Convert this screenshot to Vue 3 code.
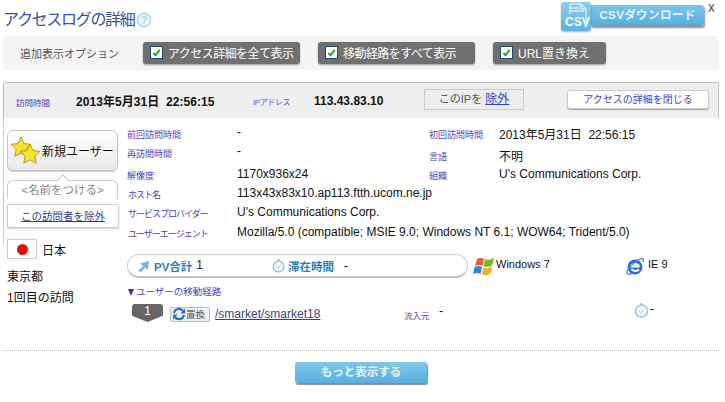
<script setup>
const options = [
  { label: 'アクセス詳細を全て表示', width: 157, tight: true },
  { label: '移動経路をすべて表示', width: 157, tight: true },
  { label: 'URL置き換え', width: 113, tight: false }
]
const leftRows = [
  { key: '前回訪問時間', val: '-', h: 16, cls: 'dash' },
  { key: '再訪問時間', val: '-', h: 22, cls: 'dash' },
  { key: '解像度', val: '1170x936x24', h: 22, cls: '' },
  { key: 'ホスト名', val: '113x43x83x10.ap113.ftth.ucom.ne.jp', h: 16, cls: '', kana: true },
  { key: 'サービスプロバイダー', val: "U's Communications Corp.", h: 22, cls: '', kana: true },
  { key: 'ユーザーエージェント', val: 'Mozilla/5.0 (compatible; MSIE 9.0; Windows NT 6.1; WOW64; Trident/5.0)', h: 18, cls: '', kana: true }
]
</script>

<template>
  <div class="page">
    <header class="top">
      <h1 class="title"><span class="title-text">アクセスログの詳細</span><svg class="help" viewBox="0 0 16 16" width="16" height="16"><circle cx="8" cy="8" r="6.6" fill="#f2fafd" stroke="#a9dcf0" stroke-width="1.6"/><text x="8" y="12" text-anchor="middle" class="help-q">?</text></svg></h1>
      <div class="csv">
        <div class="csv-icon">
          <svg viewBox="0 0 30 29" width="30" height="29">
            <path d="M9 12V2h11l5 5v18h-1" fill="none" stroke="#fff" stroke-width="1"/>
            <path d="M20 2v5h5M10 6h8M10 9h13" fill="none" stroke="#fff" stroke-width="1"/>
          </svg>
          <span class="csv-word">CSV</span>
        </div>
        <div class="csv-btn">CSVダウンロード</div>
      </div>
      <span class="close">X</span>
    </header>

    <section class="options">
      <span class="options-label">追加表示オプション</span>
      <div v-for="o in options" :key="o.label" class="opt" :class="{ tight: o.tight }" :style="{ width: o.width + 'px' }">
        <span class="check"><svg viewBox="0 0 10 10" width="10" height="10"><path d="M1.5 5.5 4 8l4.6-6" fill="none" stroke="#2aa52a" stroke-width="2.2"/></svg></span>
        {{ o.label }}
      </div>
    </section>

    <section class="panel">
      <div class="panel-head">
        <span class="lbl visit">訪問時間</span>
        <b class="visit-val">2013年5月31日&nbsp;&nbsp;22:56:15</b>
        <span class="lbl ip-lbl">IPアドレス</span>
        <b class="ip-val">113.43.83.10</b>
        <div class="ip-ex">このIPを <a>除外</a></div>
        <div class="close-detail">アクセスの詳細を閉じる</div>
      </div>

      <div class="panel-body">
        <aside class="side">
          <div class="new-user">
            <svg class="stars" viewBox="0 0 32 30" width="32" height="30">
              <path d="M11 1l3 6.600 7 .8-5.200 4.800 1.400 7L11 17l-6.200 3.200 1.400-7L1 8.400l7-.8z" fill="#f7e22e" stroke="#b89a16"/>
              <path d="M20 8l3 6.600 7 .8-5.200 4.800 1.400 7-6.200-3.400-6.200 3.400 1.400-7L10 15.400l7-.8z" fill="#f7e22e" stroke="#b89a16"/>
            </svg>
            <span>新規ユーザー</span>
          </div>
          <div class="name-btn">&lt;名前をつける&gt;</div>
          <div class="exclude"><a>この訪問者を除外</a></div>
          <div class="country">
            <span class="flag"><i></i></span>
            <span>日本</span>
          </div>
          <div class="city">東京都</div>
          <div class="count">1回目の訪問</div>
        </aside>

        <div class="main">
          <div class="info">
            <div class="info-left">
              <div v-for="r in leftRows" :key="r.key" class="row" :style="{ height: r.h + 'px' }">
                <span class="lbl key" :class="{ kana: r.kana }">{{ r.key }}</span>
                <span class="val" :class="r.cls">{{ r.val }}</span>
              </div>
            </div>
            <div class="info-right">
              <div class="row r1"><span class="lbl key rkey">初回訪問時間</span><span class="val">2013年5月31日&nbsp;&nbsp;22:56:15</span></div>
              <div class="row r2"><span class="lbl key rkey">言語</span><span class="val">不明</span></div>
              <div class="row r3"><span class="lbl key rkey">組織</span><span class="val">U's Communications Corp.</span></div>
            </div>
          </div>

          <div class="stats">
            <div class="pill">
              <svg class="arrow" viewBox="0 0 13 12" width="13" height="12"><path d="M1 11 6 6 3 3.500 12 1 11 10 8.500 7.500 4 12z" fill="#7fb2da"/></svg>
              <span class="pv">PV合計</span><span class="num">1</span>
              <svg class="clock" viewBox="0 0 13 15" width="13" height="15"><circle cx="6.500" cy="8.500" r="5.300" fill="#f4f9fd" stroke="#8fbfe2" stroke-width="1.300"/><path d="M4.500 8.500l1.600 1.500 2.400-2.600" fill="none" stroke="#8fbfe2"/><path d="M5 2h3" stroke="#8fbfe2" stroke-width="1.500"/></svg>
              <span class="pv stay">滞在時間</span><span class="dash-num">-</span>
            </div>
            <svg class="win" viewBox="0 0 22 20" width="22" height="20">
              <path d="M4 3C6.500 1.500 9 1.500 11 3L9.500 10C7.500 8.500 4.500 8.500 2 10z" fill="#e8602c"/>
              <path d="M12 3C15 4.500 18 4 21 1.500L19.500 8.500C17 11 14 11.500 10.500 10.500z" fill="#7db52a"/>
              <path d="M1.500 11C4 9.500 7 9.500 9 11L7.500 18C5.500 16.500 2.500 16.500 0 18z" fill="#2e86d2"/>
              <path d="M10.300 11.500C13 13 16 12.500 19.300 9.500L18 16.500C15 19.500 12 20 8.800 18.500z" fill="#f2b11e"/>
            </svg>
            <span class="os">Windows 7</span>
            <svg class="ie" viewBox="0 0 20 20" width="20" height="20">
              <circle cx="10" cy="11" r="7.500" fill="#2f6fc6"/>
              <path d="M5.500 10.500h9M6 10.500c.5-3 7-3.500 8 0M6.500 13c1.500 2.500 5.500 2.500 7.500.5" fill="none" stroke="#fff" stroke-width="2"/>
              <path d="M2 17C1 14 10 5 15 3c3-1 4 0 3 3M2 17c1 2 3 1.500 5 .5" fill="none" stroke="#3d7fd0" stroke-width="1.200"/>
            </svg>
            <span class="browser">IE 9</span>
          </div>

          <div class="route-title"><i class="tri"></i>ユーザーの移動経路</div>

          <div class="route">
            <div class="badge">1</div>
            <div class="replace">
              <svg viewBox="0 0 14 14" width="14" height="14"><path d="M2 6a5 5 0 0 1 9-2M12 8a5 5 0 0 1-9 2" fill="none" stroke="#1d6fd0" stroke-width="2.200"/><path d="M13 1.500v5H8.500zM1 12.500v-5h4.500z" fill="#1d6fd0"/></svg>
              <span>置換</span>
            </div>
            <a class="url">/smarket/smarket18</a>
            <span class="lbl src">流入元</span>
            <span class="src-val">-</span>
            <svg class="clock2" viewBox="0 0 15 16" width="15" height="16"><circle cx="7.500" cy="9" r="6" fill="#f4f9fd" stroke="#9cc4e6" stroke-width="1.500"/><path d="M5 9l2 1.800 3-3.200" fill="none" stroke="#9cc4e6"/><path d="M6 2h3" stroke="#9cc4e6" stroke-width="1.500"/></svg>
            <span class="time-val">-</span>
          </div>
        </div>
      </div>
    </section>

    <footer class="foot">
      <div class="more">もっと表示する</div>
    </footer>
  </div>
</template>

<style scoped>
.page {
  width: 725px;
  height: 402px;
  overflow: hidden;
  box-sizing: border-box;
  padding-left: 3px;
  background: #fff;
  color: #111;
  font-family: "Liberation Sans", "Noto Sans CJK JP", sans-serif;
  font-size: 12px;
}
.top {
  height: 36px;
  display: flex;
  align-items: flex-start;
}
.title {
  margin: 9px 0 0;
  font-size: 16px;
  line-height: 22px;
  font-weight: 400;
  color: #3b4f9c;
  display: flex;
  align-items: center;
  width: 558px;
}
.title-text { letter-spacing: -1.3px; }
.help { margin-left: 1px; }
.help-q { font: bold 11px "Liberation Sans", sans-serif; fill: #9bd6ee; }
.csv { display: flex; align-items: flex-start; margin-top: 2px; }
.csv-icon {
  width: 30px;
  height: 29px;
  background: linear-gradient(#8fcdee, #5bb4e2);
  border-radius: 3px;
  position: relative;
  box-shadow: 0 1px 2px rgba(0,0,0,.3);
  z-index: 1;
}
.csv-icon svg { position: absolute; left: 0; top: 0; }
.csv-word {
  position: absolute;
  left: 4px;
  top: 13px;
  color: #fff;
  font-weight: 700;
  font-size: 12px;
  line-height: 14px;
}
.csv-btn {
  width: 113px;
  height: 21px;
  margin-top: 3px;
  background: linear-gradient(#7cc5ea, #55afdf);
  border-radius: 0 3px 3px 0;
  box-shadow: 1px 2px 2px rgba(0,0,0,.45);
  color: #eaf6fc;
  font-weight: 700;
  font-size: 11.500px;
  line-height: 21px;
  text-align: center;
  letter-spacing: .4px;
}
.close { margin: 3px 0 0 4px; font-size: 10px; line-height: 12px; color: #223; }
.options {
  width: 716px;
  height: 34px;
  box-sizing: border-box;
  background: #f4f4f4;
  border-radius: 3px;
  display: flex;
  align-items: center;
  padding-bottom: 1px;
}
.options-label {
  width: 140px;
  padding-left: 17px;
  box-sizing: border-box;
  font-size: 11px;
  color: #555;
  white-space: nowrap;
}
.opt {
  height: 22px;
  box-sizing: border-box;
  margin-right: 18px;
  background: #707070;
  border-radius: 3px;
  box-shadow: 0 1px 2px rgba(0,0,0,.35);
  color: #fff;
  font-size: 12px;
  display: flex;
  align-items: center;
  gap: 5px;
  padding-left: 7px;
  white-space: nowrap;
}
.opt.tight { letter-spacing: -.55px; }
.check {
  width: 13px;
  height: 13px;
  box-sizing: border-box;
  background: #fff;
  border: 1px solid #24466f;
  display: flex;
  align-items: center;
  justify-content: center;
}
.check svg { width: 9px; height: 9px; }
.panel {
  width: 716px;
  margin-top: 12px;
  border-top: 1px solid #bdbdbd;
  border-radius: 3px 3px 0 0;
}
.panel-head {
  height: 35px;
  box-sizing: border-box;
  background: #eee;
  border-left: 1px solid #bdbdbd;
  border-right: 1px solid #bdbdbd;
  display: flex;
  align-items: center;
}
.lbl {
  font-size: 9px;
  color: #4a3fc2;
  white-space: nowrap;
}
.visit { width: 60px; padding-left: 12px; box-sizing: border-box; margin-top: 2px; font-size: 8.500px; }
.visit-val { width: 177px; margin-left: 12px; font-size: 12px; letter-spacing: .05px; white-space: nowrap; }
.ip-lbl { color: #6a5bd0; width: 61px; margin-top: 2px; font-size: 8px; letter-spacing: -.4px; }
.ip-val { width: 110px; font-size: 12px; white-space: nowrap; }
.ip-ex {
  width: 100px;
  height: 21px;
  box-sizing: border-box;
  margin-top: -2px;
  border: 1px solid #ccc;
  font-size: 11px;
  line-height: 19px;
  text-align: center;
  color: #555;
}
.ip-ex a { color: #2a3fc8; text-decoration: underline; font-size: 12px; }
.close-detail {
  width: 142px;
  height: 19px;
  box-sizing: border-box;
  margin: -2px 0 0 43px;
  background: #fff;
  border: 1px solid #ccc;
  border-radius: 3px;
  box-shadow: 0 1px 1px rgba(0,0,0,.3);
  color: #4a3fc2;
  font-size: 10px;
  line-height: 17px;
  text-align: center;
  white-space: nowrap;
}
.panel-body { display: flex; }
.side {
  width: 124px;
  flex: none;
  box-sizing: border-box;
  padding: 12px 0 0 3px;
  border-left: 1px solid #ccc;
  border-image: linear-gradient(#ccc 60%, transparent 62%) 1;
}
.new-user {
  width: 111px;
  height: 41px;
  box-sizing: border-box;
  border: 1px solid #c5c5c5;
  border-radius: 6px;
  background: linear-gradient(#fff, #e9e9e9);
  box-shadow: 0 1px 1px rgba(0,0,0,.2);
  display: flex;
  align-items: center;
  font-size: 12px;
  white-space: nowrap;
  color: #111;
}
.stars { margin: 0 0 0 2px; flex: none; }
.name-btn {
  width: 111px;
  height: 19px;
  margin-top: 9px;
  box-sizing: border-box;
  border: 1px solid #ccc;
  border-bottom: 0;
  border-radius: 6px 6px 0 0;
  text-align: center;
  font-size: 11.500px;
  line-height: 19px;
  color: #888;
  position: relative;
}
.name-btn::before {
  content: "";
  position: absolute;
  left: 50%;
  top: -5px;
  width: 7px;
  height: 7px;
  margin-left: -4px;
  background: #fff;
  border-left: 1px solid #ccc;
  border-top: 1px solid #ccc;
  transform: rotate(45deg);
}
.exclude {
  width: 112px;
  height: 24px;
  margin-top: 5px;
  box-sizing: border-box;
  background: #fff;
  border: 1px solid #ccc;
  border-radius: 2px;
  box-shadow: 0 1px 2px rgba(0,0,0,.2);
  text-align: center;
  font-size: 10.500px;
  line-height: 22px;
}
.exclude a { color: #2f3f8f; text-decoration: underline; }
.country {
  display: flex;
  align-items: center;
  gap: 5px;
  margin-top: 11px;
}
.flag {
  width: 30px;
  height: 20px;
  box-sizing: border-box;
  border: 1px solid #ccc;
  display: flex;
  align-items: center;
  justify-content: center;
}
.flag i { width: 11px; height: 11px; border-radius: 50%; background: #e01010; }
.city { margin-top: 9px; line-height: 18px; }
.count { margin-top: 3px; line-height: 18px; }
.main { flex: 1; min-width: 0; }
.info { display: flex; height: 135px; padding-top: 7px; box-sizing: border-box; }
.info-left { width: 302px; flex: none; }
.info-right { flex: 1; }
.row { display: flex; align-items: center; white-space: nowrap; }
.key { width: 110px; flex: none; margin-top: 2px; }
.kana { letter-spacing: -1px; padding-left: 1px; box-sizing: border-box; }
.val { font-size: 12px; }
.dash { margin-top: -2px; }
.rkey { width: 70px; }
.r1 { height: 16px; }
.r2 { height: 28px; }
.r3 { height: 10px; }
.stats { display: flex; align-items: flex-start; margin-top: 1px; height: 33px; }
.pill {
  width: 341px;
  height: 24px;
  box-sizing: border-box;
  border: 1px solid #ccc;
  border-bottom: 2px solid #c4c4c4;
  border-radius: 12px;
  display: flex;
  align-items: center;
  padding-left: 9px;
  flex: none;
}
.arrow { flex: none; }
.pv { color: #2a7fb5; font-size: 11.500px; font-weight: 700; margin-left: 4px; white-space: nowrap; }
.num { margin: -2px 0 0 4px; color: #301060; }
.clock { margin-left: 69px; flex: none; }
.stay { margin-left: 3px; }
.dash-num { margin-left: 10px; }
.win { margin: 2px 0 0 5px; flex: none; }
.os { margin-left: 1px; width: 129px; font-size: 11px; line-height: 20px; }
.ie { flex: none; margin-top: 2px; }
.browser { margin-left: 3px; font-size: 11px; line-height: 20px; }
.route-title { color: #4a3fc2; font-size: 9.500px; line-height: 14px; margin-top: -2px; display: flex; align-items: center; white-space: nowrap; }
.tri {
  width: 0;
  height: 0;
  margin: 1px 2px 0 1px;
  border-left: 3.500px solid transparent;
  border-right: 3.500px solid transparent;
  border-top: 7px solid #3a30b8;
}
.route { display: flex; align-items: center; height: 22px; margin-top: 3px; padding-left: 5px; }
.badge {
  width: 31px;
  height: 18px;
  background: #666;
  border-radius: 3px 3px 0 0;
  clip-path: polygon(0 0, 100% 0, 100% 65%, 50% 100%, 0 65%);
  color: #fff;
  text-align: center;
  font-size: 12px;
  line-height: 14px;
  flex: none;
}
.replace {
  width: 40px;
  height: 15px;
  margin: 2px 0 0 7px;
  box-sizing: border-box;
  background: #eef1f5;
  border: 1px solid #bbb;
  border-radius: 2px;
  display: flex;
  align-items: center;
  font-size: 9.500px;
  color: #555;
  padding-left: 1px;
  flex: none;
  white-space: nowrap;
}
.url { margin: 2px 0 0 5px; color: #3d3f86; text-decoration: underline; font-size: 12px; width: 189px; flex: none; }
.src { margin-top: 4px; color: #6a3fc2; width: 35px; font-size: 8.500px; }
.src-val { margin-top: -4px; width: 195px; flex: none; }
.clock2 { flex: none; margin-top: -6px; }
.time-val { margin: -8px 0 0 1px; }
.foot { width: 716px; margin-top: 26px; border-top: 1px dotted #bbb; display: flex; justify-content: center; }
.more {
  width: 132px;
  height: 21px;
  margin-top: 11px;
  background: linear-gradient(#80c8ec, #56afdf);
  border-radius: 2px;
  box-shadow: 1px 2px 1px rgba(0,0,0,.45);
  color: #eef8fd;
  font-weight: 700;
  font-size: 11.500px;
  line-height: 21px;
  text-align: center;
}
</style>

<style>
body { margin: 0; }
</style>
